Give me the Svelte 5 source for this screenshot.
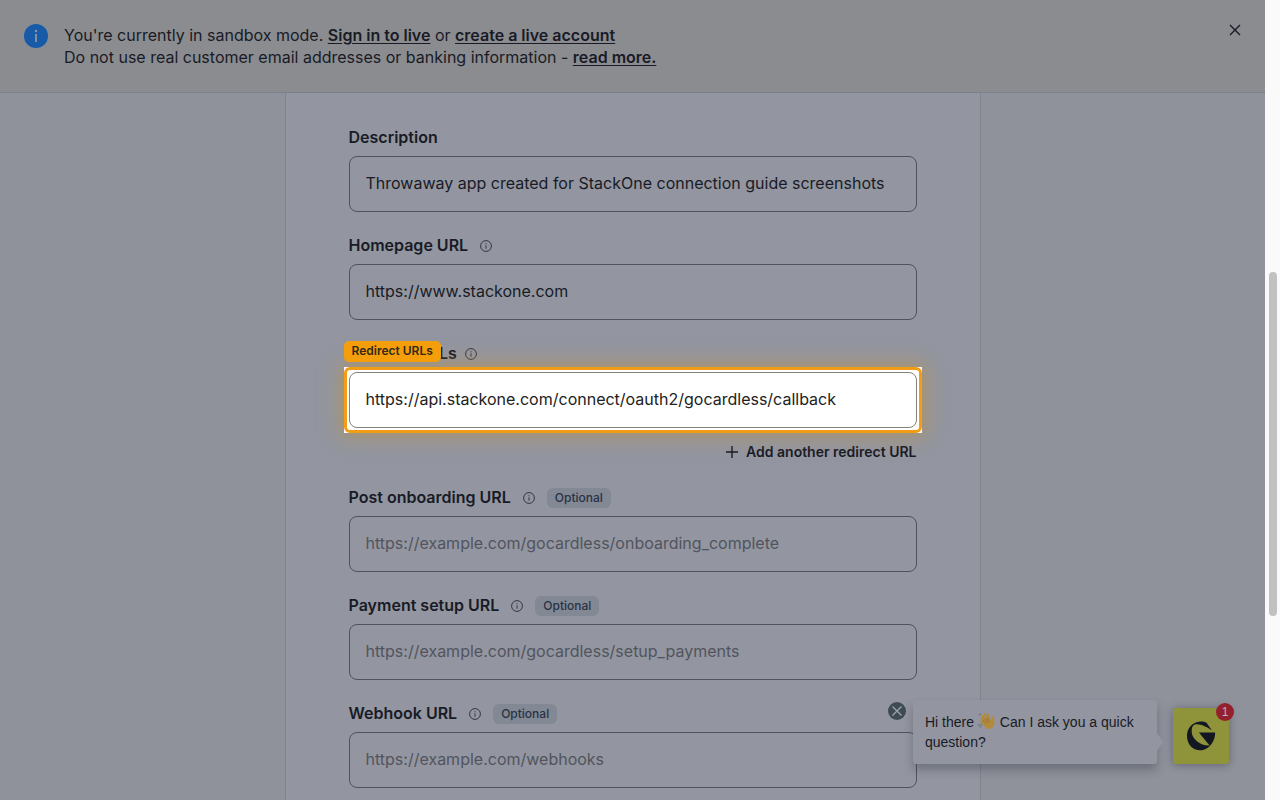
<script>
  let showBanner = $state(true);
  let showPrompt = $state(true);

  let fields = $state([
    {
      id: "description",
      label: "Description",
      value: "Throwaway app created for StackOne connection guide screenshots",
    },
    {
      id: "homepage",
      label: "Homepage URL",
      info: true,
      value: "https://www.stackone.com",
    },
    {
      id: "redirect",
      label: "Redirect URLs",
      info: true,
      highlight: true,
      value: "https://api.stackone.com/connect/oauth2/gocardless/callback",
    },
    {
      id: "onboarding",
      label: "Post onboarding URL",
      info: true,
      optional: true,
      value: "",
      placeholder: "https://example.com/gocardless/onboarding_complete",
    },
    {
      id: "payment",
      label: "Payment setup URL",
      info: true,
      optional: true,
      value: "",
      placeholder: "https://example.com/gocardless/setup_payments",
    },
    {
      id: "webhook",
      label: "Webhook URL",
      info: true,
      optional: true,
      value: "",
      placeholder: "https://example.com/webhooks",
    },
  ]);
</script>

<div class="window">
  <div class="page">
    {#if showBanner}
      <header class="banner">
        <svg class="banner-icon" viewBox="0 0 24 24" aria-hidden="true">
          <circle cx="12" cy="12" r="12" fill="#175aa8" />
          <circle cx="12" cy="7" r="1.2" fill="#8f96a3" />
          <path d="M12 10v8" stroke="#8f96a3" stroke-width="1.8" />
        </svg>
        <p>
          You're currently in sandbox mode. <a href="#live">Sign in to live</a>
          or <a href="#create">create a live account</a><br />
          Do not use real customer email addresses or banking information -
          <a href="#more">read more.</a>
        </p>
        <button
          class="close"
          aria-label="Close"
          onclick={() => (showBanner = false)}
        >
          <svg viewBox="0 0 12 12" aria-hidden="true">
            <path d="M1 1l10 10M11 1L1 11" />
          </svg>
        </button>
      </header>
    {/if}

    <main>
      <form class="panel">
        {#each fields as field (field.id)}
          <div class="field">
            <div class="label-row" class:tight={field.highlight}>
              <label for={field.id}>{field.label}</label>
              {#if field.info}
                <svg class="info" viewBox="0 0 12 12" aria-hidden="true">
                  <circle cx="6" cy="6" r="5.4" />
                  <path d="M6 5.3v3.4M6 3.2v1.1" />
                </svg>
              {/if}
              {#if field.optional}
                <span class="tag">Optional</span>
              {/if}
            </div>
            <div class="control" class:highlight={field.highlight}>
              <input
                id={field.id}
                type="text"
                placeholder={field.placeholder}
                bind:value={field.value}
              />
              {#if field.highlight}
                <span class="callout">{field.label}</span>
              {/if}
            </div>
            {#if field.highlight}
              <button type="button" class="add">
                <svg viewBox="0 0 12 12" aria-hidden="true">
                  <path d="M6 0v12M0 6h12" />
                </svg>
                Add another redirect URL
              </button>
            {/if}
          </div>
        {/each}
      </form>
    </main>

    <aside class="chat">
      {#if showPrompt}
        <button
          class="dismiss"
          aria-label="Dismiss"
          onclick={() => (showPrompt = false)}
        >
          <svg viewBox="0 0 18 18" aria-hidden="true">
            <circle cx="9" cy="9" r="9" fill="#3e4a54" />
            <path d="M4.5 4.5l9 9M13.5 4.5l-9 9" stroke="#a0a4ac" stroke-width="1.3" />
          </svg>
        </button>
        <div class="bubble">
          Hi there
          <svg class="wave" viewBox="0 0 18 18" role="img" aria-label="waving hand">
            <path d="M5 8L3.6 4.4c-.5-1.4 1-2 1.7-.8L7 6.5 5.9 2.6c-.4-1.6 1.3-2 1.9-.7l1.7 3.9L9 2.5c-.2-1.5 1.5-1.7 1.9-.4l1.2 4.8 1.2 1.4.2-2.6c.1-1.8 2.3-1.9 2.5-.1.2 2.4.9 4.3.3 7-.6 2.6-3 4.6-5.6 4.3-2-.2-3.2-1.3-4.5-2.8L2.6 10c-.9-1.2.4-2.2 1.4-1.2L2.8 7c-.8-1.3.7-2.1 1.4-1.1z" fill="#b28a3c" />
            <path d="M5 8l3.5 4M7 6.5l3 4M9.5 5.8l2 4" stroke="#7d622c" stroke-width=".5" fill="none" />
            <path d="M1 3.8C1.3 2.5 2 1.7 3 1.2M.5 12c.4 1.7 1.3 2.9 2.8 3.7M2.6 11.8c.3 1 .8 1.6 1.6 2.1" stroke="#656b76" fill="none" />
          </svg>
          Can I ask you a quick question?
        </div>
      {/if}
      <button class="launcher" aria-label="Open chat">
        <svg viewBox="0 0 93 93" aria-hidden="true">
          <path
            d="M40 2C50 0 57 2 63 5L80 29C65 18 45 8 30 10C18 12 15 28 20 45C28 62 50 78 73 76L40 36L90 36C92 60 72 91 45 91C20 91 3 72 3 46C3 22 20 4 40 2Z"
            fill="#121721"
          />
        </svg>
        <span class="badge">1</span>
      </button>
    </aside>
  </div>

  <div class="scrollbar"><div class="thumb"></div></div>
</div>

<style>
  :global(body) {
    margin: 0;
    background: #8f929b;
  }
  .window {
    display: flex;
    height: 100vh;
    overflow: hidden;
    font-family: Inter, "Liberation Sans", sans-serif;
    font-size: 16px;
    color: #181b26;
  }
  .page {
    position: relative;
    flex: 1;
    display: flex;
    flex-direction: column;
    min-width: 0;
    overflow: hidden;
    background: #8f929b;
  }
  button {
    padding: 0;
    border: 0;
    background: none;
    font: inherit;
    color: inherit;
    cursor: pointer;
  }
  svg {
    display: block;
    flex: none;
  }
  .banner {
    display: flex;
    align-items: flex-start;
    gap: 16px;
    padding: 24px;
    border-bottom: 1px solid #7a808e;
    background: #8b8c90;
  }
  .banner p {
    flex: 1;
    margin: 0;
    line-height: 22px;
  }
  .banner a {
    color: inherit;
    font-weight: 600;
    text-underline-offset: 2px;
  }
  .banner-icon {
    width: 24px;
    height: 24px;
  }
  .close svg {
    width: 12px;
    height: 12px;
    stroke: #181b26;
    stroke-width: 1.4;
  }
  main {
    flex: 1;
    display: flex;
    justify-content: center;
    align-items: flex-start;
    min-height: 0;
  }
  .panel {
    box-sizing: border-box;
    width: 100%;
    max-width: 696px;
    padding: 35px 63px;
    border: solid #7f838e;
    border-width: 0 1px;
    background: #9396a0;
  }
  .field {
    display: flex;
    flex-direction: column;
    margin-bottom: 24px;
  }
  .label-row {
    display: flex;
    align-items: center;
    height: 20px;
    margin-bottom: 8px;
    font-weight: 600;
  }
  .label-row label {
    padding-bottom: 2px;
  }
  .info {
    width: 12px;
    height: 12px;
    margin-left: 12px;
    fill: none;
    stroke: #343741;
  }
  .tight .info {
    margin-left: 8px;
  }
  .tag {
    margin-left: 12px;
    padding: 0 8px;
    border-radius: 6px;
    background: #828894;
    color: #293245;
    font-size: 12px;
    font-weight: 500;
    line-height: 20px;
  }
  .control {
    position: relative;
  }
  input {
    box-sizing: border-box;
    display: block;
    width: 100%;
    height: 56px;
    padding: 0 16px 2px;
    border: 1px solid #50535d;
    border-radius: 8px;
    background: transparent;
    font: inherit;
    color: inherit;
  }
  input::placeholder {
    color: #51545e;
    opacity: 1;
  }
  .highlight input {
    position: relative;
    border-color: #85817b;
    background: #fff;
    color: #222;
  }
  .highlight::before,
  .highlight::after {
    content: "";
    position: absolute;
    inset: -5px;
    pointer-events: none;
  }
  .highlight::before {
    background: #fff;
    box-shadow: 0 0 18px 3px rgba(200, 145, 45, 0.5);
  }
  .highlight::after {
    border: 3px solid #f29d13;
    border-radius: 6px;
  }
  .callout {
    position: absolute;
    left: -5px;
    bottom: 66px;
    padding: 0 8px 1px;
    border-radius: 5px;
    background: #f59e0b;
    color: #33291a;
    font-size: 12px;
    font-weight: 600;
    line-height: 20px;
  }
  .add {
    display: flex;
    align-items: center;
    align-self: flex-end;
    gap: 8px;
    margin-top: 14px;
    padding-bottom: 2px;
    font-size: 14px;
    font-weight: 600;
    line-height: 20px;
  }
  .add svg {
    width: 12px;
    height: 12px;
    stroke: #181b26;
    stroke-width: 1.4;
  }
  .chat {
    position: absolute;
    right: 36px;
    bottom: 36px;
    display: flex;
    align-items: flex-start;
    font-family: "Liberation Sans", Arial, sans-serif;
  }
  .dismiss {
    margin: 2px 7px 0 0;
  }
  .dismiss svg {
    width: 18px;
    height: 18px;
  }
  .bubble {
    position: relative;
    box-sizing: border-box;
    width: 244px;
    margin-right: 16px;
    padding: 12px;
    border-radius: 3px;
    background: #9396a0;
    box-shadow: 0 6px 10px rgba(30, 35, 50, 0.3);
    font-size: 14px;
    line-height: 20px;
  }
  .bubble::after {
    content: "";
    position: absolute;
    left: 100%;
    top: 33px;
    border: 9px solid transparent;
    border-right-width: 0;
    border-left: 6px solid #9396a0;
  }
  .wave {
    display: inline-block;
    width: 18px;
    height: 18px;
    vertical-align: -3px;
  }
  .launcher {
    position: relative;
    display: flex;
    align-items: center;
    justify-content: center;
    align-self: flex-end;
    width: 56px;
    height: 56px;
    border-radius: 3px;
    background: #8f9339;
    box-shadow: 0 1px 8px rgba(30, 35, 50, 0.4);
  }
  .launcher svg {
    width: 30px;
    height: 30px;
  }
  .badge {
    position: absolute;
    top: -5px;
    right: -5px;
    width: 18px;
    border-radius: 50%;
    background: #93202c;
    color: #b9b3ba;
    font-size: 12px;
    line-height: 18px;
    text-align: center;
  }
  .scrollbar {
    box-sizing: border-box;
    width: 15px;
    height: 100%;
    padding: 0 3px 0 4px;
    background: #fafafa;
  }
  .thumb {
    height: 43%;
    margin-top: 34vh;
    border-radius: 4px;
    background: #c1c1c1;
  }
</style>
